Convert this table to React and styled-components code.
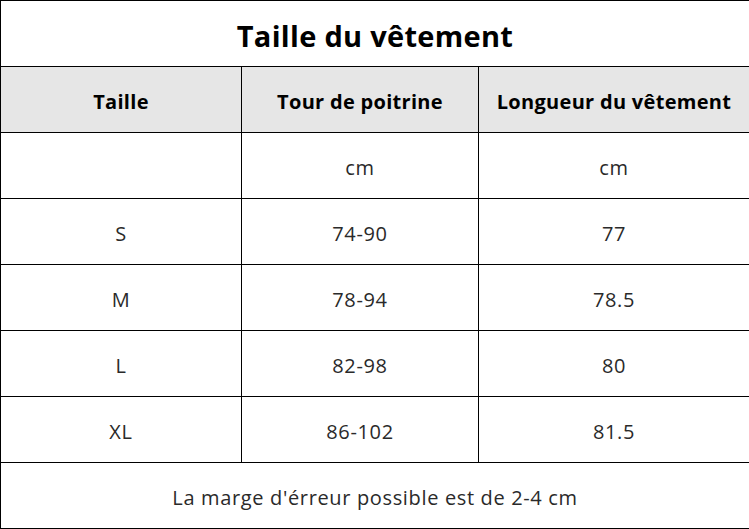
import React from 'react';
import styled, { createGlobalStyle } from 'styled-components';

const Global = createGlobalStyle`
    body {
        margin: 0;
        background: #fff;
        font-family: "Open Sans", "Noto Sans", sans-serif;
    }
`;

const Table = styled.table`
    border-collapse: collapse;
    table-layout: fixed;
    width: 749px;
    color: #1a1a1a;

    td, th {
        border: 1px solid #000;
        height: 61px;
        padding: 4px 0 0;
        text-align: center;
        vertical-align: middle;
    }
`;

const Title = styled.th`
    font-size: 29px;
    font-weight: 700;
    color: #000;
    letter-spacing: 0.3px;
`;

const Head = styled.th`
    background: #e6e6e6;
    font-size: 20px;
    font-weight: 700;
    color: #000;
    letter-spacing: 0.3px;
`;

const Cell = styled.td`
    font-size: 20px;
    font-weight: 400;
    color: #2a2a2a;
    letter-spacing: 0.65px;
`;

const rows = [
    ['', 'cm', 'cm'],
    ['S', '74-90', '77'],
    ['M', '78-94', '78.5'],
    ['L', '82-98', '80'],
    ['XL', '86-102', '81.5'],
];

export default () => (
    <>
        <Global />
        <Table>
            <colgroup>
                <col style={{ width: 241 }} />
                <col style={{ width: 237 }} />
                <col style={{ width: 271 }} />
            </colgroup>
            <tbody>
                <tr><Title colSpan={3}>Taille du vêtement</Title></tr>
                <tr>
                    <Head>Taille</Head>
                    <Head>Tour de poitrine</Head>
                    <Head>Longueur du vêtement</Head>
                </tr>
                {rows.map((r, i) => (
                    <tr key={i}>
                        {r.map((c, j) => <Cell key={j}>{c}</Cell>)}
                    </tr>
                ))}
                <tr><Cell colSpan={3}>La marge d'érreur possible est de 2-4 cm</Cell></tr>
            </tbody>
        </Table>
    </>
);
